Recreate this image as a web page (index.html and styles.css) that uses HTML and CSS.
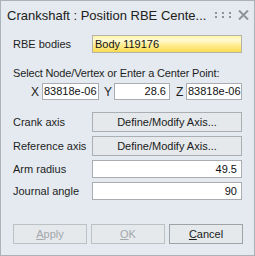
FILE: index.html
```html
<!DOCTYPE html>
<html>
<head>
<meta charset="utf-8">
<link rel="stylesheet" href="styles.css">
</head>
<body>
<div class="window">
  <div class="titlebar">
    <span class="title">Crankshaft : Position RBE Cente...</span>
    <span class="grip">
      <svg width="17" height="6" viewBox="0 0 17 6"><g fill="#8c9399"><rect x="0" y="0" width="2" height="2"/><rect x="0" y="4" width="2" height="2"/><rect x="7" y="0" width="2" height="2"/><rect x="7" y="4" width="2" height="2"/><rect x="14" y="0" width="2" height="2"/><rect x="14" y="4" width="2" height="2"/></g></svg>
    </span>
    <span class="close">
      <svg width="11" height="10" viewBox="0 0 11 10"><path d="M1 0.5 L10 9.5 M10 0.5 L1 9.5" stroke="#8c9399" stroke-width="2"/></svg>
    </span>
  </div>
  <div class="content">
    <div class="row r-rbe">
      <span class="label">RBE bodies</span>
      <div class="field yellow">Body 119176</div>
    </div>
    <div class="caption">Select Node/Vertex or Enter a Center Point:</div>
    <div class="xyz">
      <span class="axl axl-x">X</span>
      <div class="field small">83818e-06</div>
      <span class="axl axl-y">Y</span>
      <div class="field small right">28.6</div>
      <span class="axl axl-z">Z</span>
      <div class="field small">83818e-06</div>
    </div>
    <div class="row r-crank">
      <span class="label">Crank axis</span>
      <div class="btn">Define/Modify Axis...</div>
    </div>
    <div class="row r-ref">
      <span class="label">Reference axis</span>
      <div class="btn">Define/Modify Axis...</div>
    </div>
    <div class="row r-arm">
      <span class="label">Arm radius</span>
      <div class="field right">49.5</div>
    </div>
    <div class="row r-journal">
      <span class="label">Journal angle</span>
      <div class="field right">90</div>
    </div>
    <div class="actions">
      <div class="btn action disabled"><u>A</u>pply</div>
      <div class="btn action disabled"><u>O</u>K</div>
      <div class="btn action"><u>C</u>ancel</div>
    </div>
  </div>
</div>
</body>
</html>
```
FILE: styles.css
```css
html, body {
  margin: 0;
  padding: 0;
  background: #e4eaef;
}
.window {
  width: 255px;
  height: 256px;
  box-sizing: border-box;
  border: 1px solid #aab2ba;
  background: #e4eaef;
  font-family: "Liberation Sans", Arial, sans-serif;
  font-size: 11px;
  color: #1e1e1e;
  display: flex;
  flex-direction: column;
}
.titlebar {
  height: 27px;
  display: flex;
  align-items: center;
  padding-left: 6px;
}
.title {
  font-size: 13px;
  color: #202020;
  flex: 1;
  white-space: nowrap;
  padding-top: 2px;
}
.grip {
  display: flex;
  margin-right: 6px;
  padding-top: 1px;
}
.close {
  display: flex;
  margin-right: 5px;
  padding-top: 1px;
}
.content {
  padding: 0 11px 0 12px;
  display: flex;
  flex-direction: column;
}
.row {
  display: flex;
  align-items: center;
}
.label {
  width: 79px;
  flex: none;
  white-space: nowrap;
}
.field {
  box-sizing: border-box;
  height: 18px;
  width: 150px;
  border: 1px solid #a9adb1;
  background: #fff;
  line-height: 16px;
  padding: 0 2px;
  white-space: nowrap;
  overflow: hidden;
  color: #111;
}
.field.right {
  text-align: right;
  padding-right: 4px;
}
.field.yellow {
  border-color: #b4b4a8;
  background: linear-gradient(to bottom, #fff3a8 0%, #fffad6 25%, #ffed96 55%, #fbdc50 100%);
  padding-left: 2px;
}
.r-rbe { margin-top: 7px; height: 18px; }
.caption {
  margin-top: 13px;
  line-height: 14px;
  height: 14px;
  white-space: nowrap;
  letter-spacing: -0.15px;
}
.xyz {
  margin-top: 3px;
  display: flex;
  align-items: center;
  height: 17px;
}
.field.small {
  height: 17px;
  width: 57px;
  padding: 0 1px;
  line-height: 15px;
}
.field.small.right {
  width: 56px;
  padding-right: 3px;
}
.xyz .field.small:last-child { width: 56px; }
.axl {
  flex: none;
  font-size: 12px;
}
.axl-x { margin-left: 18px; width: 11px; }
.axl-y { width: 10px; padding-left: 5px; }
.axl-z { width: 10px; padding-left: 6px; }
.btn {
  box-sizing: border-box;
  width: 150px;
  height: 20px;
  border: 1px solid #abafb3;
  background: #e5e9ec;
  text-align: center;
  line-height: 18px;
  white-space: nowrap;
  color: #1a1a1a;
}
.r-crank { margin-top: 12px; }
.r-ref { margin-top: 4px; }
.r-arm { margin-top: 4px; }
.r-journal { margin-top: 4px; }
.actions {
  margin-top: 24px;
  display: flex;
  gap: 4px;
}
.btn.action {
  width: 74px;
  height: 20px;
  border-color: #9ea3a7;
}
.btn.action.disabled {
  color: #a2a7ab;
  border-color: #bcc1c5;
}
u {
  text-decoration: underline;
  text-underline-offset: 1px;
}
```
